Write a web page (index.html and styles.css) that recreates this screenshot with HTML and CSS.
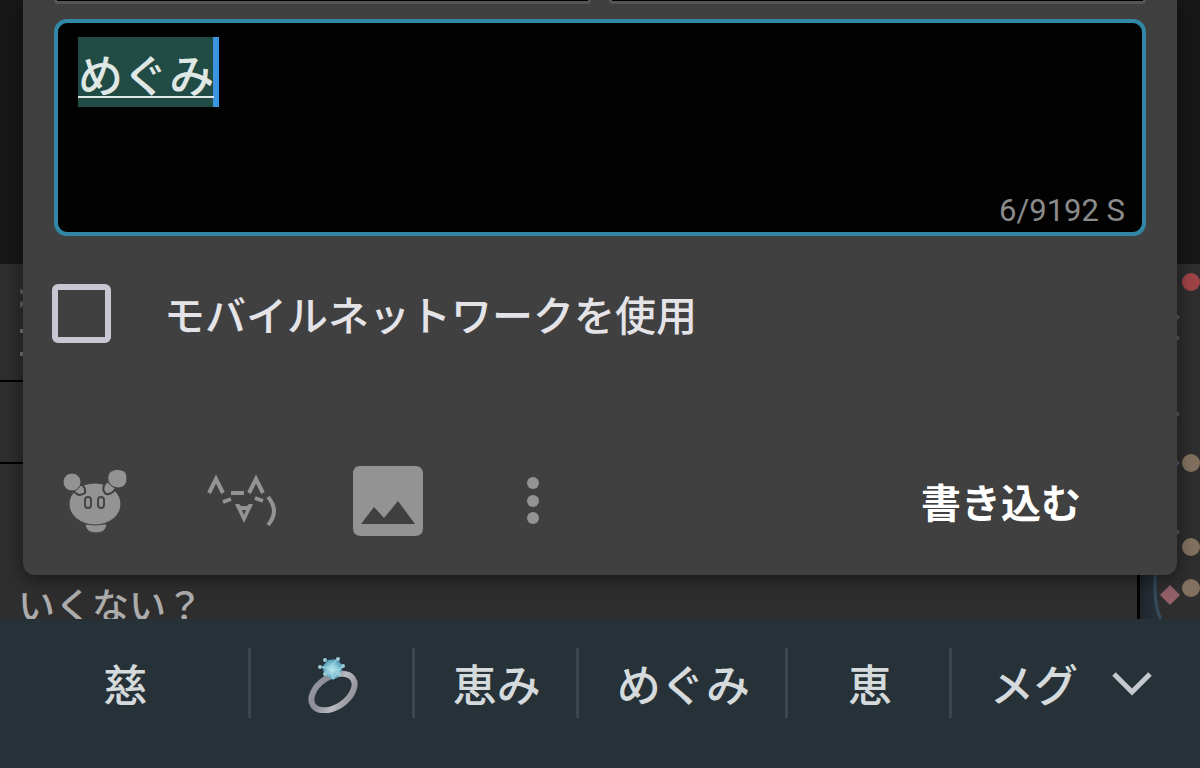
FILE: index.html
```html
<!DOCTYPE html>
<html lang="ja">
<head>
<meta charset="utf-8">
<meta name="viewport" content="width=device-width, initial-scale=1">
<title>書き込み</title>
<link rel="stylesheet" href="styles.css">
</head>
<body>
<main class="scene">
  <section class="thread">
    <div class="thread-list">
      <div class="thread-head"></div>
      <div class="post post-tall">
        <svg class="post-marks" width="8" height="117" viewBox="0 0 8 117" aria-hidden="true">
          <g fill="#777c80"><path d="M1 25l3 1v5l-3-2zM1 38l3-1v5l-3 2z" opacity=".7"/><path d="M1 65h4v4H1zM1 88h4v4H1z"/></g>
        </svg>
      </div>
      <div class="post post-short"></div>
      <div class="post post-last"><p class="post-text">いくない？</p></div>
    </div>
    <svg class="minimap" width="63" height="355" viewBox="0 0 63 355" aria-hidden="true">
      <defs><linearGradient id="edge"><stop offset="0" stop-color="#202428"/><stop offset=".8" stop-color="#25303a"/><stop offset="1" stop-color="#2d2e2f"/></linearGradient></defs>
      <rect width="3" height="355" fill="#000"/>
      <rect x="3" y="300" width="19" height="55" fill="url(#edge)"/>
      <path d="M18 300v26q0 16 6 30" fill="none" stroke="#344b5d" stroke-width="3"/>
      <circle cx="54" cy="18" r="9" fill="#a04447"/>
      <g fill="#82715f"><circle cx="54" cy="199" r="9"/><circle cx="54" cy="283" r="9"/><circle cx="54" cy="324" r="9"/></g>
      <path d="M33 321l10 10-10 10-10-10z" fill="#94606a"/>
      <g fill="#5b5b5b"><path d="M40 50l3 3-3 3zM40 71l3 3-3 3zM40 147l3 3-3 3zM40 196l3 3-3 3zM40 265l3 3-3 3z"/></g>
    </svg>
  </section>

  <form class="dialog">
    <div class="fields">
      <div class="field-end"></div>
      <div class="field-end"></div>
    </div>
    <div class="editor">
      <textarea class="message" aria-label="本文" rows="1">めぐみ</textarea>
      <output class="counter">6/9192 S</output>
    </div>
    <label class="option"><input class="tick" type="checkbox"><span>モバイルネットワークを使用</span></label>
    <div class="toolbar">
      <button class="tool" type="button" aria-label="キャラクター">
        <svg width="72" height="72" viewBox="0 0 72 72" aria-hidden="true">
          <g fill="#939393" stroke="#404040" stroke-width="1">
            <path d="M25 59h22q-1 9-11 9t-11-9z"/>
            <ellipse cx="35" cy="39" rx="26" ry="21"/>
            <path d="M13 25l8-6q5 4 4 9-7 5-12-3zM47 16l9 7q-4 7-10 6-6-5 1-13z" stroke-width="2"/>
            <circle cx="12" cy="17" r="9"/>
            <path d="M49 8q5-5 12-3 6 1 6 8 0 9-8 10-8 0-11-7-1-4 1-8z"/>
          </g>
          <g fill="none" stroke="#444" stroke-width="2"><rect x="25" y="32" width="6" height="11" rx="3"/><rect x="38" y="32" width="6" height="11" rx="3"/></g>
        </svg>
      </button>
      <button class="tool" type="button" aria-label="顔文字">
        <svg width="72" height="72" viewBox="0 0 72 72" aria-hidden="true">
          <g fill="none" stroke="#939393" stroke-width="4">
            <path d="M3 28L10 14l7 14M43 28l7-14 7 14M25 28h13M17 37l8-3M49 33l8 3M62 32q12 14 0 28"/>
          </g>
          <path d="M29 39h4l2 2h6l2-2h4l-9 19zM36 45l2 5 2-5z" fill="#939393" fill-rule="evenodd"/>
        </svg>
      </button>
      <button class="tool" type="button" aria-label="画像">
        <svg width="72" height="72" viewBox="0 0 72 72" aria-hidden="true">
          <path fill="#939393" fill-rule="evenodd" d="M8 1h55q8 0 8 8v54q0 8-8 8H9q-8 0-8-8V9q0-8 7-8zM9 59h54L46 36 32 53 22 42z"/>
        </svg>
      </button>
      <button class="tool" type="button" aria-label="メニュー">
        <svg width="72" height="72" viewBox="0 0 72 72" aria-hidden="true">
          <g fill="#939393"><circle cx="35" cy="18" r="6"/><circle cx="35" cy="36" r="6"/><circle cx="35" cy="53" r="6"/></g>
        </svg>
      </button>
      <button class="submit" type="button">書き込む</button>
    </div>
  </form>
</main>

<nav class="suggestions" aria-label="変換候補">
  <button class="word word-first" type="button">慈</button>
  <button class="word" type="button" aria-label="指輪">
    <svg width="52" height="60" viewBox="0 0 52 60" aria-hidden="true">
      <defs>
        <linearGradient id="metal" x1="0" y1="0" x2="1" y2="1"><stop offset="0" stop-color="#96979f"/><stop offset=".3" stop-color="#8c8d96"/><stop offset=".6" stop-color="#b9bac0"/><stop offset="1" stop-color="#85868d"/></linearGradient>
        <radialGradient id="gem"><stop offset="0" stop-color="#c4eaf2"/><stop offset=".6" stop-color="#80bfd3"/><stop offset="1" stop-color="#4e97b2"/></radialGradient>
      </defs>
      <ellipse cx="26" cy="39" rx="24" ry="15" transform="rotate(-34 26 39)" fill="none" stroke="url(#metal)" stroke-width="6"/>
      <path d="M15 14l6-7 9-1 6 7-3 10-7 4-8-5z" fill="url(#gem)"/>
      <path d="M15 14l8 1 7-9M17 22l6-7 8 2 5-4M23 15l3 11 7-10" fill="none" stroke="#a5dce7" stroke-width="1"/>
      <g fill="#9ccbd8"><circle cx="18" cy="7" r="2"/><circle cx="31" cy="6" r="2"/><circle cx="13" cy="14" r="2"/><circle cx="36" cy="13" r="2"/><circle cx="18" cy="21" r="2"/><circle cx="32" cy="21" r="2"/></g>
    </svg>
  </button>
  <button class="word" type="button">恵み</button>
  <button class="word" type="button">めぐみ</button>
  <button class="word" type="button">恵</button>
  <button class="word word-last" type="button">メグ</button>
  <button class="expand" type="button" aria-label="候補を展開">
    <svg width="44" height="44" viewBox="0 0 44 44" aria-hidden="true"><path d="M4 13l18 18 18-18" fill="none" stroke="#c6c9cb" stroke-width="5"/></svg>
  </button>
</nav>
</body>
</html>
```

FILE: styles.css
```css
* { box-sizing: border-box; }

body {
  margin: 0;
  height: 100vh;
  display: flex;
  flex-direction: column;
  overflow: hidden;
  background: #263238;
  color: #e4e4e8;
  font-family: "Noto Sans CJK JP", sans-serif;
}

button {
  margin: 0;
  padding: 0;
  border: 0;
  background: none;
  color: inherit;
  font: inherit;
  cursor: pointer;
}

svg { display: block; }

.scene {
  flex: 1;
  min-height: 0;
  display: grid;
  grid-template: minmax(0, 1fr) / minmax(0, 1fr);
  overflow: hidden;
}

.thread,
.dialog { grid-area: 1 / 1; }

.thread {
  display: flex;
  align-items: flex-end;
  background: linear-gradient(#181818 264px, #2e2e2e 264px);
}

.thread-list {
  flex: 1;
  height: 100%;
  display: flex;
  flex-direction: column;
}

.thread-head { height: 264px; }

.post { border-bottom: 2px solid #000; }
.post-tall { height: 118px; padding-left: 19px; }
.post-short { height: 82px; }

.post-last {
  flex: 1;
  min-height: 0;
  padding: 116px 18px 0;
  border: 0;
  overflow: hidden;
}

.post-text {
  margin: 0;
  color: #acacac;
  font-size: 37px;
  font-weight: 500;
  line-height: 48px;
}

.dialog {
  align-self: start;
  position: relative;
  margin: 0 23px;
  padding: 0 31px 38px 29px;
  display: flex;
  flex-direction: column;
  background: #404040;
  border-radius: 0 0 12px 12px;
  box-shadow: 0 4px 18px rgba(0, 0, 0, 0.5);
}

.fields {
  display: flex;
  gap: 18px;
  padding-left: 2px;
  margin-bottom: 15px;
}

.field-end {
  flex: 1;
  height: 4px;
  border: solid #555;
  border-width: 0 3px 3px;
  border-radius: 0 0 10px 10px;
  background: #000;
}

.editor {
  margin-left: 2px;
  height: 217px;
  padding: 14px 17px 2px 20px;
  display: flex;
  flex-direction: column;
  justify-content: space-between;
  border: 4px solid #3087a6;
  border-radius: 13px;
  background: #020202;
}

.message {
  width: 100%;
  height: 70px;
  padding: 4px 0 0;
  border: 0;
  outline: 0;
  resize: none;
  overflow: hidden;
  color: #e0e8e6;
  font-family: "Noto Sans CJK JP", sans-serif;
  font-size: 45px;
  font-weight: 500;
  line-height: 66px;
  /* Composing text: underline, caret, then the highlight under both. */
  background:
    linear-gradient(#e0e8e6, #e0e8e6) 0 59px / 136px 2px no-repeat,
    linear-gradient(#3995e0, #3995e0) 135px 0 / 6px 70px no-repeat,
    linear-gradient(#214b45, #214b45) 0 0 / 136px 70px no-repeat;
}

.counter {
  align-self: flex-end;
  color: #8b8b8b;
  font-family: Roboto, sans-serif;
  font-size: 31px;
  line-height: 38px;
}

.option {
  margin-top: 48px;
  display: flex;
  align-items: center;
  gap: 53px;
  font-size: 41px;
  font-weight: 500;
  line-height: 59px;
}

.tick {
  appearance: none;
  width: 59px;
  height: 59px;
  margin: 0;
  border: 6px solid #cac5d2;
  border-radius: 6px;
}

.toolbar {
  margin-top: 122px;
  padding: 0 65px 0 8px;
  display: flex;
  align-items: center;
  gap: 74px;
}

.tool { flex: none; }

.submit {
  margin-left: auto;
  color: #fff;
  font-size: 40px;
  font-weight: 700;
  line-height: 60px;
}

.suggestions {
  height: 149px;
  display: flex;
  align-items: flex-start;
  padding-top: 29px;
  background: #263238;
}

.word {
  flex: none;
  min-width: 164px;
  height: 70px;
  padding: 0 35px 0 38px;
  display: flex;
  align-items: center;
  justify-content: center;
  border-right: 3px solid #3b474c;
  color: #d5dadc;
  font-size: 44px;
  font-weight: 500;
  line-height: 70px;
  white-space: nowrap;
}

.word-first { flex: 1; }

.word-last {
  min-width: 0;
  padding-right: 0;
  border: 0;
}

.expand {
  width: 122px;
  height: 70px;
  padding-right: 14px;
  display: flex;
  align-items: center;
  justify-content: center;
}
```
